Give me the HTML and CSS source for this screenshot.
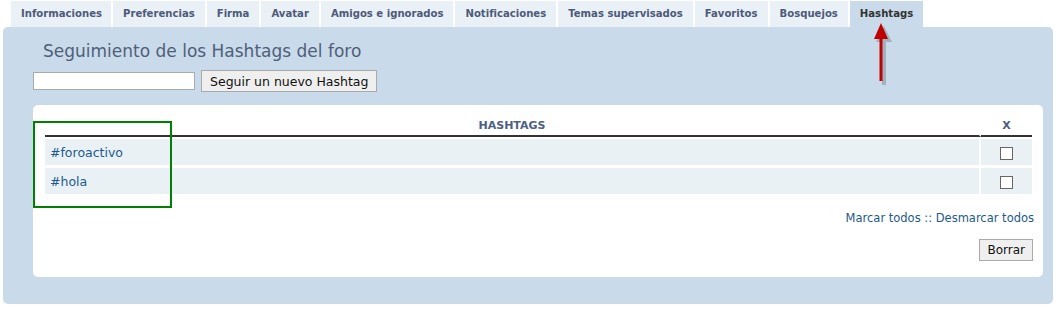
FILE: index.html
```html
<!DOCTYPE html>
<html lang="es">
<head>
    <meta charset="UTF-8">
    <title>Hashtags</title>
    <link rel="stylesheet" href="styles.css">
</head>
<body>
    <!-- Pestañas del perfil -->
    <ul class="tabs">
        <li>Informaciones</li>
        <li>Preferencias</li>
        <li>Firma</li>
        <li>Avatar</li>
        <li>Amigos e ignorados</li>
        <li>Notificaciones</li>
        <li>Temas supervisados</li>
        <li>Favoritos</li>
        <li>Bosquejos</li>
        <li class="active">Hashtags</li>
    </ul>

    <div class="panel">
        <h2 class="title">Seguimiento de los Hashtags del foro</h2>
        <form class="follow">
            <input type="text" class="follow-input">
            <button type="button" class="btn">Seguir un nuevo Hashtag</button>
        </form>

        <div class="box">
            <table class="tags">
                <tr>
                    <th>HASHTAGS</th>
                    <th class="col-x">X</th>
                </tr>
                <tr>
                    <td><a href="#">#foroactivo</a></td>
                    <td class="col-x"><span class="check"></span></td>
                </tr>
                <tr>
                    <td><a href="#">#hola</a></td>
                    <td class="col-x"><span class="check"></span></td>
                </tr>
            </table>
            <div class="marks"><a href="#">Marcar todos</a> :: <a href="#">Desmarcar todos</a></div>
            <div class="actions"><button type="button" class="btn btn-small">Borrar</button></div>
        </div>
    </div>

    <!-- anotaciones -->
    <div class="note-box"></div>
    <svg class="note-arrow" width="32" height="72" viewBox="0 0 32 72">
        <path d="M11 17 L11 60" stroke="#7f8a96" stroke-width="4" opacity="0.5" transform="translate(3,3)"/>
        <path d="M3 17 L11 1 L19 17 Z" fill="#7f8a96" opacity="0.5" transform="translate(3,3)"/>
        <path d="M11 15 L11 59" stroke="#c00000" stroke-width="3"/>
        <path d="M4 17 L11 1 L18 17 Z" fill="#c00000"/>
    </svg>
</body>
</html>
```

FILE: styles.css
```css
/* Gaya umum */
body {
    margin: 0;
    background: #fff;
    font-family: "DejaVu Sans", Verdana, sans-serif;
    font-size: 12px;
    color: #333;
}

/* pestañas */
.tabs {
    display: flex;
    gap: 2px;
    list-style: none;
    margin: 0 0 0 11px;
    padding: 1px 0 0;
    height: 27px;
    box-sizing: border-box;
}
.tabs li {
    background-color: #e9f1f7;
    color: #4e5a7a;
    font-size: 10.1px;
    font-weight: bold;
    padding: 0 10px;
    line-height: 26px;
}
.tabs li:first-child { padding-right: 9px; }
.tabs li.active {
    background-color: #c9daea;
    color: #333;
}

/* panel principal */
.panel {
    background-color: #c9daea;
    margin: 0 9px 0 3px;
    border-radius: 5px;
    padding: 12px 10px 27px 30px;
    height: 277px;
    box-sizing: border-box;
}
.title {
    font-size: 17px;
    font-weight: normal;
    color: #4f6079;
    margin: 0 0 7px 10px;
    line-height: 24px;
}
.follow {
    display: flex;
    align-items: center;
    gap: 6px;
    margin: 0;
}
.follow-input {
    width: 162px;
    height: 18px;
    box-sizing: border-box;
    border: 1px solid #aaa;
    margin: 0;
    padding: 1px 3px;
}
.btn {
    font-family: "DejaVu Sans", Verdana, sans-serif;
    font-size: 12.5px;
    color: #111;
    background-color: #efefef;
    border: 1px solid #aaa;
    padding: 2px 8px;
    height: 22px;
    margin: 0;
}
.btn-small {
    font-size: 12px;
    padding: 2px 7px;
}

.box {
    background-color: #fff;
    border-radius: 5px;
    margin-top: 13px;
    padding: 10px 11px 16px 12px;
    height: 172px;
    box-sizing: border-box;
}
.tags {
    width: 100%;
    border-collapse: separate;
    border-spacing: 0 0;
}
.tags th {
    color: #4d6082;
    font-size: 11px;
    font-weight: bold;
    height: 20px;
    border-bottom: 2px solid #333;
    padding: 0;
}
.tags th:first-child, .tags td:first-child {
    border-right: 2px solid #fff;
}
.tags td {
    background-color: #e9f1f5;
    height: 26px;
    padding: 0 0 0 5px;
    border-top: 3px solid #fff;
    font-size: 12.5px;
}
.tags tr:nth-child(2) td { border-top-width: 2px; }
.tags .col-x {
    width: 51px;
    text-align: center;
    padding: 0;
}
.tags a {
    color: #1d5a8c;
    text-decoration: none;
}
.check {
    display: inline-block;
    width: 11px;
    height: 11px;
    border: 1px solid #666;
    vertical-align: middle;
    background: #fff;
}

.marks {
    text-align: right;
    font-size: 11.5px;
    margin: 17px -2px 0 0;
    color: #1d5a8c;
}
.marks a {
    color: #1d5a8c;
    text-decoration: none;
}
.actions {
    text-align: right;
    margin: 14px -1px 0 0;
}

/* anotaciones */
.note-box {
    position: absolute;
    left: 33px;
    top: 121px;
    width: 135px;
    height: 83px;
    border: 2px solid #008000;
}
.note-arrow {
    position: absolute;
    left: 870px;
    top: 22px;
}
```
